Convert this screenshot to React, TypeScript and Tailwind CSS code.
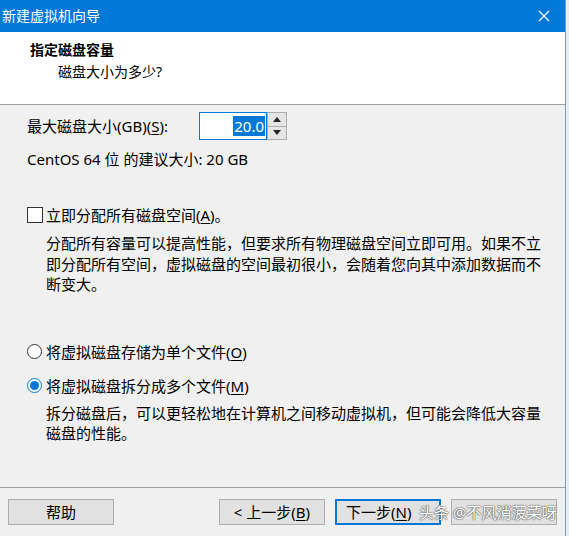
import React from "react";

const font = { fontFamily: '"Noto Sans", "Noto Sans CJK SC", sans-serif' };

function Key({ k }: { k: string }) {
  return <span className="underline underline-offset-2">{k}</span>;
}

function Btn({ children, primary, left }: { children?: React.ReactNode; primary?: boolean; left?: boolean }) {
  return (
    <div
      className={`w-[106px] h-[26px] flex items-center text-[15px] bg-[#e1e1e1] ${
        left ? "justify-start pl-[9px]" : "justify-center"
      } ${primary ? "border-2 border-[#0078d7]" : "border border-[#adadad]"}`}
    >
      {children}
    </div>
  );
}

export default function App() {
  return (
    <div className="w-[569px] h-[536px] flex bg-[#e8edf2] overflow-hidden text-black" style={font}>
      <div className="w-[566px] h-full flex flex-col border-r border-[#7a9cc0] bg-[#f0f0f0]">
        {/* title bar */}
        <div className="h-[32px] bg-[#0078d7] flex items-center justify-between pl-[2px] pr-[15px] text-white">
          <span className="text-[14px] leading-none">新建虚拟机向导</span>
          <svg width="12" height="12" viewBox="0 0 12 12">
            <path d="M1 1 L11 11 M11 1 L1 11" stroke="white" strokeWidth="1.2" />
          </svg>
        </div>

        {/* header */}
        <div className="h-[73px] bg-white border-b border-[#a0a0a0] pt-[8px]">
          <div className="pl-[30px] h-[20px] leading-[20px] text-[14px] font-bold">指定磁盘容量</div>
          <div className="pl-[58px] mt-[2px] h-[20px] leading-[20px] text-[14px]">磁盘大小为多少?</div>
        </div>

        {/* body */}
        <div className="h-[383px] pl-[27px] pr-[20px] pt-[7px] text-[15px] border-b border-[#a0a0a0]">
          <div className="flex items-center h-[28px]">
            <span className="w-[172px]">
              最大磁盘大小(GB)(<Key k="S" />):
            </span>
            <div className="flex h-[28px]">
              <div className="w-[68px] h-full bg-white border border-[#0078d7] flex items-center justify-end pr-[1px]">
                <span className="bg-[#0078d7] text-white leading-[20px] px-[1px]">20.0</span>
              </div>
              <div className="w-[20px] h-full flex flex-col border border-[#adadad] bg-[#e5e5e5]">
                <div className="flex-1 flex items-center justify-center border-b border-[#adadad]">
                  <svg width="8" height="5" viewBox="0 0 8 5">
                    <path d="M0 5 L4 0 L8 5 Z" fill="#222" />
                  </svg>
                </div>
                <div className="flex-1 flex items-center justify-center">
                  <svg width="8" height="5" viewBox="0 0 8 5">
                    <path d="M0 0 L4 5 L8 0 Z" fill="#222" />
                  </svg>
                </div>
              </div>
            </div>
          </div>

          <div className="mt-[9px] h-[20px] leading-[20px]">CentOS 64 位 的建议大小: 20 GB</div>

          <div className="mt-[36px] h-[20px] flex items-center">
            <div className="w-[16px] h-[16px] border border-[#333] bg-white mr-[3px]" />
            <span className="leading-[20px]">
              立即分配所有磁盘空间(<Key k="A" />)。
            </span>
          </div>

          <p className="mt-[8px] pl-[19px] leading-[20.5px]">
            分配所有容量可以提高性能，但要求所有物理磁盘空间立即可用。如果不立即分配所有空间，虚拟磁盘的空间最初很小，会随着您向其中添加数据而不断变大。
          </p>

          <div className="mt-[47px] h-[20px] flex items-center">
            <div className="w-[15px] h-[15px] rounded-full border border-[#333] bg-white mr-[4px]" />
            <span className="leading-[20px]">
              将虚拟磁盘存储为单个文件(<Key k="O" />)
            </span>
          </div>

          <div className="mt-[14px] h-[20px] flex items-center">
            <div className="w-[15px] h-[15px] rounded-full border border-[#0078d7] bg-white mr-[4px] flex items-center justify-center">
              <div className="w-[9px] h-[9px] rounded-full bg-[#0078d7]" />
            </div>
            <span className="leading-[20px]">
              将虚拟磁盘拆分成多个文件(<Key k="M" />)
            </span>
          </div>

          <p className="mt-[7px] pl-[19px] leading-[20.5px]">
            拆分磁盘后，可以更轻松地在计算机之间移动虚拟机，但可能会降低大容量磁盘的性能。
          </p>
        </div>

        {/* footer */}
        <div className="relative flex-1 flex pt-[11px] pl-[8px]">
          <Btn>帮助</Btn>
          <div className="ml-[105px] flex gap-[10px]">
            <Btn>
              &lt; 上一步(<Key k="B" />)
            </Btn>
            <Btn primary left>
              下一步(<Key k="N" />)
            </Btn>
            <Btn />
          </div>
          <span
            className="absolute left-[419px] top-[12px] text-[15px] leading-[24px] text-white whitespace-nowrap"
            style={{ textShadow: "0 0 1px #555, 0 0 1px #555, 0 0 2px #777" }}
          >
            头条 @不风消菠菜呀
          </span>
        </div>
      </div>
      <div className="flex-1" />
    </div>
  );
}
